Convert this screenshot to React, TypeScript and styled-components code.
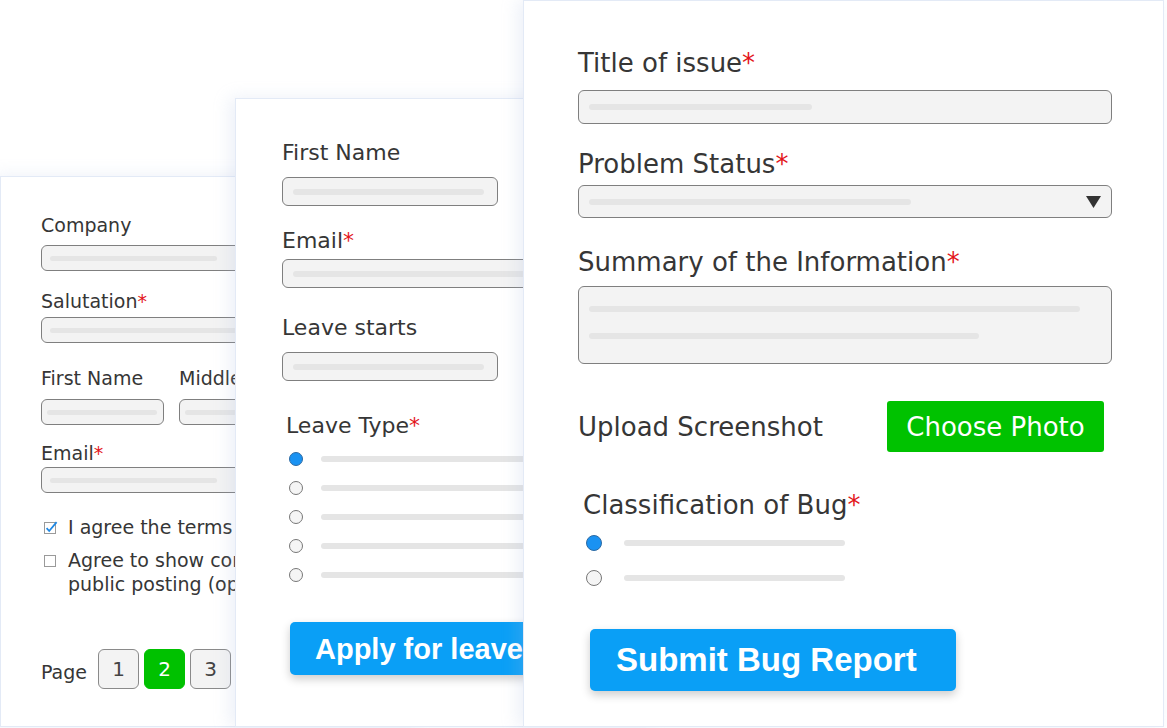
import React from "react";
import styled, { createGlobalStyle } from "styled-components";

const GlobalStyle = createGlobalStyle`
  html, body {
    margin: 0;
    padding: 0;
    background: #ffffff;
  }
  body {
    font-family: "DejaVu Sans", Verdana, sans-serif;
    color: #363636;
  }
`;

const Desk = styled.div`
  position: relative;
  width: 1167px;
  height: 728px;
  overflow: hidden;
  background: #ffffff;
`;

// each form is a window lying on the desk, later ones on top
const Sheet = styled.section<{
  $x: number;
  $y: number;
  $w: number;
  $pt: number;
  $pl: number;
  $fs: number;
  $lh: number;
}>`
  position: absolute;
  left: ${(p) => p.$x}px;
  top: ${(p) => p.$y}px;
  bottom: 1px;
  width: ${(p) => p.$w}px;
  box-sizing: border-box;
  padding: ${(p) => p.$pt}px 0 0 ${(p) => p.$pl}px;
  display: flex;
  flex-direction: column;
  align-items: flex-start;
  font-size: ${(p) => p.$fs}px;
  line-height: ${(p) => p.$lh}px;
  background: #ffffff;
  border: 1px solid #e3eaf6;
  box-shadow: -5px 0 16px rgba(170, 188, 225, 0.22);
  overflow: hidden;
`;

const Label = styled.div<{ $mt?: number; $ml?: number }>`
  margin-top: ${(p) => p.$mt ?? 0}px;
  margin-left: ${(p) => p.$ml ?? 0}px;
  color: #363636;
  white-space: nowrap;
`;

const Req = styled.span`
  color: #e3151b;
`;

const Field = styled.div<{ $w: number; $h: number; $mt: number; $pad?: number }>`
  box-sizing: border-box;
  flex-shrink: 0;
  width: ${(p) => p.$w}px;
  height: ${(p) => p.$h}px;
  margin-top: ${(p) => p.$mt}px;
  padding: 0 ${(p) => p.$pad ?? 10}px 0 ${(p) => p.$pad ?? 10}px;
  display: flex;
  align-items: center;
  justify-content: space-between;
  background: #f3f3f3;
  border: 1px solid #7f7f7f;
  border-radius: 6px;
`;

const NoteField = styled(Field)`
  flex-direction: column;
  align-items: flex-start;
  justify-content: flex-start;
  gap: 21px;
  padding-top: 19px;
`;

const Bar = styled.span<{ $w: number; $h?: number }>`
  display: block;
  flex-shrink: 0;
  width: ${(p) => p.$w}px;
  height: ${(p) => p.$h ?? 6}px;
  border-radius: 3px;
  background: #e5e5e5;
`;

const Pair = styled.div<{ $mt: number }>`
  display: grid;
  grid-template-columns: 123px 123px;
  column-gap: 15px;
  margin-top: ${(p) => p.$mt}px;
  white-space: nowrap;
`;

const Check = styled.div<{ $mt: number }>`
  display: flex;
  align-items: flex-start;
  gap: 10px;
  margin: ${(p) => p.$mt}px 0 0 3px;
  line-height: 24px;
  white-space: nowrap;
`;

const CheckMark = styled.svg`
  flex-shrink: 0;
  margin-top: 6px;
`;

const Pager = styled.div<{ $mt: number }>`
  display: flex;
  align-items: flex-end;
  gap: 5px;
  margin-top: ${(p) => p.$mt}px;
`;

const PageText = styled.span`
  padding-bottom: 6px;
  margin-right: 6px;
`;

const PageButton = styled.span<{ $on?: boolean }>`
  box-sizing: border-box;
  width: 41px;
  height: 40px;
  display: flex;
  align-items: center;
  justify-content: center;
  font-size: 20px;
  border-radius: 6px;
  border: 1px solid ${(p) => (p.$on ? "#00c100" : "#8a8a8a")};
  background: ${(p) => (p.$on ? "#00c100" : "#f3f3f3")};
  color: ${(p) => (p.$on ? "#ffffff" : "#444444")};
`;

const Choice = styled.div<{ $h: number; $mt?: number; $ml: number; $gap: number }>`
  display: flex;
  align-items: center;
  height: ${(p) => p.$h}px;
  margin: ${(p) => p.$mt ?? 0}px 0 0 ${(p) => p.$ml}px;
  gap: ${(p) => p.$gap}px;
`;

const Dot = styled.span<{ $d: number; $on?: boolean }>`
  box-sizing: border-box;
  flex-shrink: 0;
  width: ${(p) => p.$d}px;
  height: ${(p) => p.$d}px;
  border-radius: 50%;
  border: 1px solid ${(p) => (p.$on ? "#2d6aa3" : "#777777")};
  background: ${(p) => (p.$on ? "#1a92f2" : "#f5f5f5")};
`;

const ActionButton = styled.div<{ $w: number; $h: number; $fs: number; $mt: number; $ml: number; $pl: number }>`
  box-sizing: border-box;
  flex-shrink: 0;
  width: ${(p) => p.$w}px;
  height: ${(p) => p.$h}px;
  margin: ${(p) => p.$mt}px 0 0 ${(p) => p.$ml}px;
  padding-left: ${(p) => p.$pl}px;
  display: flex;
  align-items: center;
  font-family: "Liberation Sans", Arial, sans-serif;
  font-weight: 700;
  font-size: ${(p) => p.$fs}px;
  color: #ffffff;
  white-space: nowrap;
  background: #0a9ff6;
  border-radius: 5px;
  box-shadow: 0 4px 10px rgba(0, 0, 0, 0.2);
`;

const UploadRow = styled.div<{ $mt: number }>`
  display: grid;
  grid-template-columns: 309px 217px;
  align-items: center;
  margin-top: ${(p) => p.$mt}px;
`;

const PhotoButton = styled.div`
  height: 51px;
  display: flex;
  align-items: center;
  justify-content: center;
  background: #00c200;
  color: #ffffff;
  border-radius: 3px;
`;

const Caret = () => (
  <svg width="15" height="12" viewBox="0 0 15 12">
    <polygon points="0,0 15,0 7.5,12" fill="#333333" />
  </svg>
);

const Ticked = () => (
  <CheckMark width="14" height="13" viewBox="0 0 14 13">
    <rect x="0.5" y="1.5" width="11" height="11" fill="#ffffff" stroke="#9a9a9a" />
    <path d="M2.6 7.2 L5.2 10 L12.6 1.2" fill="none" stroke="#1e88e5" strokeWidth="1.8" />
  </CheckMark>
);

const Unticked = () => (
  <CheckMark width="14" height="13" viewBox="0 0 14 13">
    <rect x="0.5" y="1.5" width="11" height="11" fill="#ffffff" stroke="#9a9a9a" />
  </CheckMark>
);

const ContactForm = () => (
  <Sheet $x={0} $y={176} $w={420} $pt={37} $pl={40} $fs={19} $lh={22}>
    <Label>Company</Label>
    <Field $w={320} $h={26} $mt={9} $pad={8}>
      <Bar $w={167} $h={5} />
    </Field>
    <Label $mt={19}>
      Salutation<Req>*</Req>
    </Label>
    <Field $w={320} $h={26} $mt={5} $pad={8}>
      <Bar $w={260} $h={5} />
    </Field>
    <Pair $mt={24}>
      <span>First Name</span>
      <span>Middle Name</span>
    </Pair>
    <Pair $mt={10}>
      <Field $w={123} $h={26} $mt={0} $pad={5}>
        <Bar $w={110} $h={5} />
      </Field>
      <Field $w={123} $h={26} $mt={0} $pad={5}>
        <Bar $w={110} $h={5} />
      </Field>
    </Pair>
    <Label $mt={17}>
      Email<Req>*</Req>
    </Label>
    <Field $w={320} $h={26} $mt={3} $pad={8}>
      <Bar $w={167} $h={5} />
    </Field>
    <Check $mt={22}>
      <Ticked />
      <span>I agree the terms and conditions</span>
    </Check>
    <Check $mt={9}>
      <Unticked />
      <span>
        Agree to show contact details for
        <br />
        public posting (optional)
      </span>
    </Check>
    <Pager $mt={53}>
      <PageText>Page</PageText>
      <PageButton>1</PageButton>
      <PageButton $on>2</PageButton>
      <PageButton>3</PageButton>
    </Pager>
  </Sheet>
);

const LeaveForm = () => (
  <Sheet $x={235} $y={98} $w={420} $pt={41} $pl={46} $fs={22} $lh={26}>
    <Label>First Name</Label>
    <Field $w={216} $h={29} $mt={11}>
      <Bar $w={191} />
    </Field>
    <Label $mt={22}>
      Email<Req>*</Req>
    </Label>
    <Field $w={330} $h={29} $mt={5}>
      <Bar $w={300} />
    </Field>
    <Label $mt={27}>Leave starts</Label>
    <Field $w={216} $h={29} $mt={11}>
      <Bar $w={191} />
    </Field>
    <Label $mt={32} $ml={4}>
      Leave Type<Req>*</Req>
    </Label>
    {[true, false, false, false, false].map((on, i) => (
      <Choice key={i} $h={29} $mt={i === 0 ? 5 : 0} $ml={7} $gap={18}>
        <Dot $d={14} $on={on} />
        <Bar $w={300} />
      </Choice>
    ))}
    <ActionButton $w={320} $h={53} $fs={29} $mt={33} $ml={8} $pl={25}>
      Apply for leave
    </ActionButton>
  </Sheet>
);

const BugForm = () => (
  <Sheet $x={523} $y={0} $w={641} $pt={47} $pl={54} $fs={26} $lh={30}>
    <Label>
      Title of issue<Req>*</Req>
    </Label>
    <Field $w={534} $h={34} $mt={12}>
      <Bar $w={223} />
    </Field>
    <Label $mt={25}>
      Problem Status<Req>*</Req>
    </Label>
    <Field $w={534} $h={33} $mt={6}>
      <Bar $w={322} />
      <Caret />
    </Field>
    <Label $mt={29}>
      Summary of the Information<Req>*</Req>
    </Label>
    <NoteField $w={534} $h={78} $mt={9}>
      <Bar $w={491} />
      <Bar $w={390} />
    </NoteField>
    <UploadRow $mt={37}>
      <span>Upload Screenshot</span>
      <PhotoButton>Choose Photo</PhotoButton>
    </UploadRow>
    <Label $mt={38} $ml={5}>
      Classification of Bug<Req>*</Req>
    </Label>
    <Choice $h={35} $mt={5} $ml={8} $gap={22}>
      <Dot $d={16} $on />
      <Bar $w={221} />
    </Choice>
    <Choice $h={35} $ml={8} $gap={22}>
      <Dot $d={16} />
      <Bar $w={221} />
    </Choice>
    <ActionButton $w={366} $h={62} $fs={33} $mt={34} $ml={12} $pl={26}>
      Submit Bug Report
    </ActionButton>
  </Sheet>
);

export default function App() {
  return (
    <>
      <GlobalStyle />
      <Desk>
        <ContactForm />
        <LeaveForm />
        <BugForm />
      </Desk>
    </>
  );
}
